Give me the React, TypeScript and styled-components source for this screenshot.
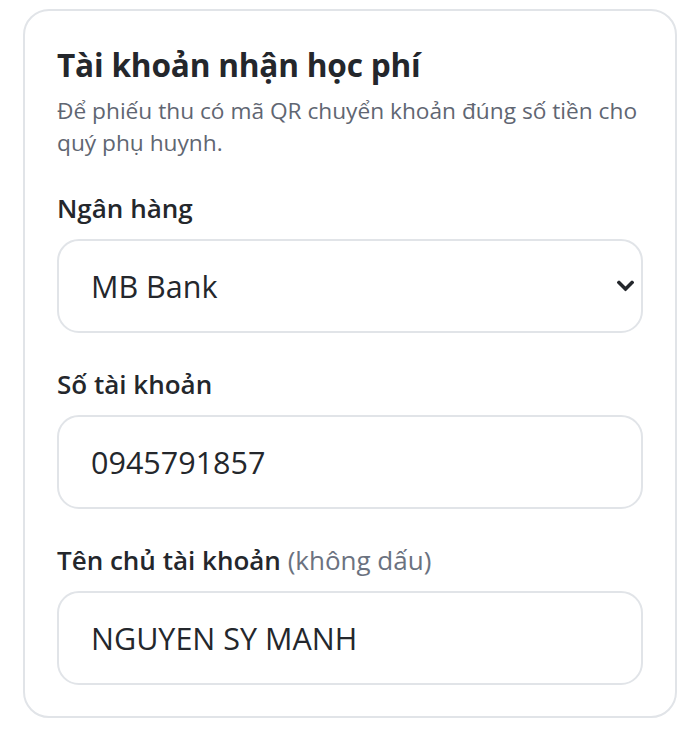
import React from 'react';
import styled, { createGlobalStyle } from 'styled-components';

const GlobalStyle = createGlobalStyle`
  html, body {
    margin: 0;
    padding: 0;
    background: #ffffff;
  }
  body {
    font-family: "Open Sans", "Noto Sans", sans-serif;
    color: #24272c;
  }
  * {
    box-sizing: border-box;
  }
`;

const Page = styled.div`
  padding: 9px 23px 0 23px;
`;

const Card = styled.section`
  width: 654px;
  border: 2px solid #e1e4e8;
  border-radius: 26px;
  padding: 34px 32px 31px 32px;
  background: #fff;
`;

const Title = styled.h2`
  margin: 0;
  font-size: 31.6px;
  line-height: 40px;
  font-weight: 700;
  color: #24272c;
  letter-spacing: -0.2px;
`;

const Subtitle = styled.p`
  margin: 10px 0 0 0;
  font-size: 22.7px;
  line-height: 32px;
  color: #5f6672;
`;

const Field = styled.div<{ $first?: boolean }>`
  display: flex;
  flex-direction: column;
  gap: 15px;
  margin-top: ${(p) => (p.$first ? '33px' : '35px')};
`;

const Label = styled.label`
  font-size: 26px;
  line-height: 32px;
  font-weight: 600;
  color: #24272c;
`;

const Hint = styled.span`
  font-weight: 400;
  color: #6b7280;
`;

const SelectWrap = styled.div`
  position: relative;
`;

const fieldBox = `
  width: 100%;
  height: 94px;
  border: 2px solid #e1e4e8;
  border-radius: 22px;
  padding: 0 60px 0 32px;
  font-family: "Open Sans", "Noto Sans", sans-serif;
  font-size: 30.5px;
  color: #24272c;
  background: #fff;
  outline: none;
`;

const Select = styled.select`
  ${fieldBox}
  appearance: none;
  -webkit-appearance: none;
`;

const Input = styled.input`
  ${fieldBox}
`;

const Chevron = styled.svg`
  position: absolute;
  right: 9px;
  top: 50%;
  transform: translateY(-50%);
  width: 17px;
  height: 11px;
  pointer-events: none;
`;

export default function App() {
  return (
    <>
      <GlobalStyle />
      <Page>
        <Card>
          <Title>Tài khoản nhận học phí</Title>
          <Subtitle>
            Để phiếu thu có mã QR chuyển khoản đúng số tiền cho quý phụ huynh.
          </Subtitle>

          <Field $first>
            <Label htmlFor="bank">Ngân hàng</Label>
            <SelectWrap>
              <Select id="bank" defaultValue="MB Bank">
                <option>MB Bank</option>
                <option>Vietcombank</option>
                <option>Techcombank</option>
              </Select>
              <Chevron viewBox="0 0 17 11">
                <path d="M2 2 L8.5 8.5 L15 2" fill="none" stroke="#24272c" strokeWidth="3.4" strokeLinecap="square" />
              </Chevron>
            </SelectWrap>
          </Field>

          <Field>
            <Label htmlFor="acc">Số tài khoản</Label>
            <Input id="acc" defaultValue="0945791857" />
          </Field>

          <Field>
            <Label htmlFor="owner">
              Tên chủ tài khoản <Hint>(không dấu)</Hint>
            </Label>
            <Input id="owner" defaultValue="NGUYEN SY MANH" />
          </Field>
        </Card>
      </Page>
    </>
  );
}
